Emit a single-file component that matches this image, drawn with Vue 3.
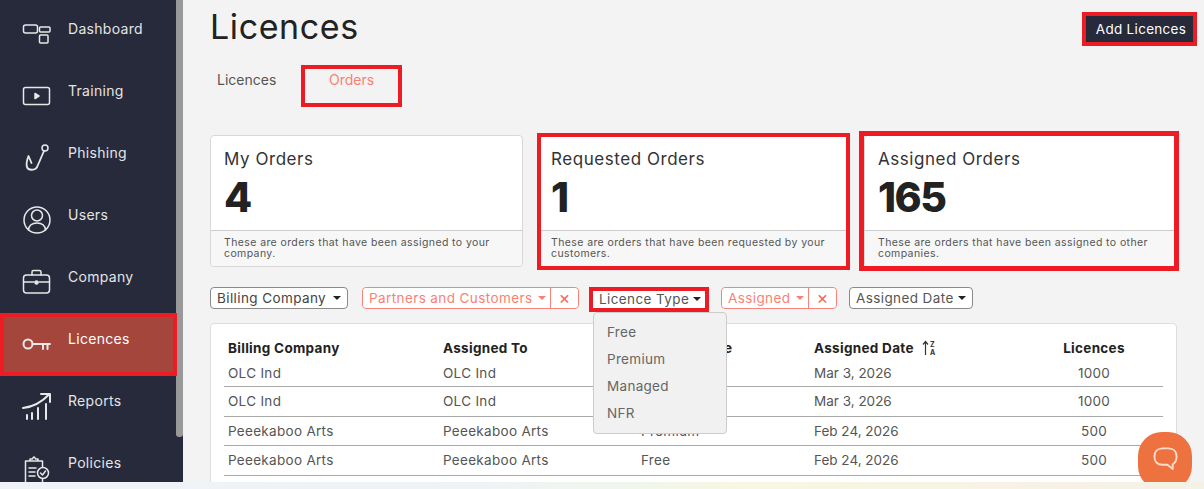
<script setup>
const nav = [
  { label: 'Dashboard', icon: '<rect x="1.5" y="6" width="14" height="8" rx="2"/><rect x="17.5" y="8" width="10.5" height="5" rx="1"/><rect x="17.5" y="16" width="8.5" height="8" rx="1"/>' },
  { label: 'Training', icon: '<rect x="1.5" y="6.5" width="26" height="17" rx="2"/><path d="M13 12.5l4 2.5-4 2.5z" fill="#e8e8e8"/>' },
  { label: 'Phishing', icon: '<circle cx="23" cy="5" r="3"/><path d="M22 8L15.5 23C14 28 5.5 28 4.7 23C4.3 20 5 17 6.5 13L9.5 20" stroke-width="1.8"/>' },
  { label: 'Users', icon: '<circle cx="15" cy="15" r="13"/><circle cx="15" cy="10.5" r="5.5"/><path d="M6.5 25C7 20 10 18 15 18C20 18 23 20 23.5 25"/>' },
  { label: 'Company', icon: '<rect x="1.5" y="8" width="26" height="18" rx="3"/><path d="M10 8V5Q10 3.5 11.5 3.5H17.5Q19 3.5 19 5V8M1.5 15H12M17 15H27.5"/><circle cx="14.5" cy="15.5" r="1.5" fill="#e8e8e8"/>' },
  { label: 'Licences', active: true, icon: '<circle cx="6" cy="15" r="4.5" stroke-width="2"/><path d="M10.5 15H28M21 15V20M25.5 15V20" stroke-width="2"/>' },
  { label: 'Reports', icon: '<path d="M1 17C10 16 20 11 27.5 3M19 3H28V11M5 24V28M10 22V28M16 17V28M24 13V28" stroke-width="2"/>' },
  { label: 'Policies', icon: '<path d="M8 8H3.5V32H20.5V26M16 8H20.5V14M8 8V6H10.5Q12 2 13.5 6H16V8ZM7 15H14M7 19H13M7 23H13"/><circle cx="21" cy="20" r="5.5"/><path d="M18.5 20l2 2 3-4"/>' },
]

const stats = [
  { title: 'My Orders', value: '4', note: 'These are orders that have been assigned to your company.', mark: '' },
  { title: 'Requested Orders', value: '1', note: 'These are orders that have been requested by your customers.', mark: 'mark-a' },
  { title: 'Assigned Orders', value: '165', note: 'These are orders that have been assigned to other companies.', mark: 'mark-b' },
]

const rows = [
  ['OLC Ind', 'OLC Ind', 'Managed', 'Mar 3, 2026', '1000'],
  ['OLC Ind', 'OLC Ind', 'Managed', 'Mar 3, 2026', '1000'],
  ['Peeekaboo Arts', 'Peeekaboo Arts', 'Premium', 'Feb 24, 2026', '500'],
  ['Peeekaboo Arts', 'Peeekaboo Arts', 'Free', 'Feb 24, 2026', '500'],
]
</script>

<template>
  <div class="page">
    <div class="top">
      <aside class="sidebar">
        <nav class="nav">
          <a v-for="item in nav" :key="item.label" class="nav-item" :class="{ active: item.active }">
            <svg class="nav-icon" viewBox="0 0 30 30" width="30" height="30" fill="none" stroke="#e8e8e8" stroke-width="1.5" stroke-linecap="round" stroke-linejoin="round" v-html="item.icon"></svg>
            <span>{{ item.label }}</span>
          </a>
        </nav>
        <div class="scroll"><div class="thumb"></div></div>
      </aside>

      <main class="main">
        <header class="head">
          <h1>Licences</h1>
          <button class="add">Add Licences</button>
        </header>

        <div class="tabs">
          <a class="tab">Licences</a>
          <a class="tab current">Orders</a>
        </div>

        <section class="cards">
          <div v-for="s in stats" :key="s.title" class="card">
            <div class="card-body">
              <h3>{{ s.title }}</h3>
              <div class="value">{{ s.value }}</div>
            </div>
            <div class="card-foot">{{ s.note }}</div>
            <div v-if="s.mark" class="mark" :class="s.mark"></div>
          </div>
        </section>

        <section class="filters">
          <button class="filter f-billing">Billing Company<i class="caret"></i></button>
          <div class="group f-partners">
            <button class="filter on">Partners and Customers<i class="caret"></i></button>
            <button class="clear">×</button>
          </div>
          <div class="dropdown-wrap">
            <button class="filter f-type">Licence Type<i class="caret"></i></button>
            <ul class="dropdown">
              <li>Free</li>
              <li>Premium</li>
              <li>Managed</li>
              <li>NFR</li>
            </ul>
          </div>
          <div class="group f-assigned">
            <button class="filter on">Assigned<i class="caret"></i></button>
            <button class="clear">×</button>
          </div>
          <button class="filter f-date">Assigned Date<i class="caret"></i></button>
        </section>

        <section class="table-card">
          <div class="row row-head">
            <div>Billing Company</div>
            <div>Assigned To</div>
            <div>Licence Type</div>
            <div class="sort">
              Assigned Date
              <svg viewBox="0 0 14 16" width="14" height="16">
                <path d="M3.5 15V2M1 4.5L3.5 1.5L6 4.5" fill="none" stroke="#333" stroke-width="1.2"/>
                <text x="8" y="7" font-size="7" font-weight="700" fill="#333">Z</text>
                <text x="8" y="15" font-size="7" font-weight="700" fill="#333">A</text>
              </svg>
            </div>
            <div class="num">Licences</div>
          </div>
          <div v-for="(r, i) in rows" :key="i" class="row">
            <div>{{ r[0] }}</div>
            <div>{{ r[1] }}</div>
            <div>{{ r[2] }}</div>
            <div class="date">{{ r[3] }}</div>
            <div class="num">{{ r[4] }}</div>
          </div>
        </section>
      </main>

      <button class="chat">
        <svg viewBox="0 0 28 28" width="27" height="27" fill="none" stroke="#fbdccb" stroke-width="2" stroke-linejoin="round">
          <path d="M11 3.5H17C22.5 3.5 25.5 7 25.5 12C25.5 16 24 18.5 21.5 20V25L16 20.5H11C5.5 20.5 2.5 17 2.5 12C2.5 7 5.5 3.5 11 3.5Z"/>
        </svg>
      </button>
    </div>
    <div class="strip"></div>
  </div>
</template>

<style>
html, body {
  margin: 0;
  background: #f3f3f3;
}
</style>

<style scoped>
* {
  box-sizing: border-box;
}

.page {
  width: 1204px;
  height: 489px;
  display: flex;
  flex-direction: column;
  overflow: hidden;
  font-family: Inter, "Liberation Sans", sans-serif;
  letter-spacing: 0.3px;
  background: #f3f3f3;
}

.top {
  height: 482px;
  display: flex;
  position: relative;
  overflow: hidden;
}

.strip {
  height: 7px;
  background: linear-gradient(90deg, #f0f2f8 0%, #eef3f6 40%, #f0f6ec 52%, #f9f6e2 62%, #f7f2e4 85%, #f5f1e6 100%);
}

.sidebar {
  width: 183px;
  flex-shrink: 0;
  display: flex;
  background: #262a3b;
}

.nav {
  width: 176px;
  padding-top: 3px;
}

.nav-item {
  display: flex;
  align-items: flex-start;
  height: 62px;
  width: 177px;
  padding: 16px 0 0 22px;
  color: #e4e4e4;
  font-size: 14px;
}

.nav-item span {
  margin-left: 16px;
  line-height: 20px;
}

.nav-item.active {
  height: 63px;
  margin-bottom: -1px;
  position: relative;
  background: #a5463c;
  color: #fff;
  box-shadow: inset 0 0 0 4px #ed1c24;
}

.nav-icon {
  flex-shrink: 0;
}

.scroll {
  width: 7px;
  height: 100%;
}

.thumb {
  height: 437px;
  background: #999;
  border-radius: 0 0 3px 3px;
}

.main {
  flex: 1;
  padding: 12px 27px 0;
  min-width: 0;
}

.head {
  display: flex;
  justify-content: space-between;
  align-items: flex-start;
  margin-right: -20px;
}

.head h1 {
  margin: 0;
  font-size: 34px;
  font-weight: 400;
  letter-spacing: 0.6px;
  line-height: 30px;
  color: #222;
}

.add {
  width: 115px;
  height: 34px;
  margin: 0;
  padding: 0 0 0 3px;
  border: 4px solid #ed1c24;
  background: #262a3b;
  color: #fff;
  font: inherit;
  font-size: 13.5px;
  letter-spacing: inherit;
}

.tabs {
  display: flex;
  margin-top: 19px;
  height: 42px;
  font-size: 14px;
}

.tab {
  width: 91px;
  padding: 6px 0 0 7px;
  line-height: 18px;
  letter-spacing: 0;
  color: #555;
}

.tab.current {
  width: 101px;
  padding-left: 0;
  text-align: center;
  color: #fb7f74;
  box-shadow: inset 0 0 0 4px #ed1c24;
}

.cards {
  display: grid;
  grid-template-columns: repeat(3, 313px);
  gap: 14px;
  margin-top: 28px;
}

.card {
  position: relative;
  height: 132px;
  display: flex;
  flex-direction: column;
  background: #fff;
  border: 1px solid #d8d8d8;
  border-radius: 4px;
}

.card-body {
  flex: 1;
  padding: 12px 14px 0 13px;
}

.card-body h3 {
  margin: 0;
  font-size: 17px;
  font-weight: 400;
  letter-spacing: 0.55px;
  line-height: 22px;
  color: #333;
}

.value {
  margin-top: 2px;
  font-size: 41px;
  font-weight: 800;
  letter-spacing: -1.5px;
  line-height: 50px;
  color: #222;
}

.card-foot {
  height: 36px;
  padding: 6px 12px 0 13px;
  background: #f7f7f7;
  border-top: 1px solid #ccc;
  border-radius: 0 0 4px 4px;
  font-size: 10.5px;
  letter-spacing: 0.4px;
  line-height: 11px;
  color: #555;
}

.mark {
  position: absolute;
  border: 4px solid #ed1c24;
  pointer-events: none;
}

.mark-a {
  inset: -3px -1px -4px -1px;
}

.mark-b {
  inset: -5px -3px -5px -6px;
  border-width: 5px;
}

.filters {
  display: flex;
  align-items: flex-start;
  gap: 12px;
  margin-top: 20px;
}

.filter {
  display: flex;
  align-items: center;
  justify-content: space-between;
  height: 22px;
  padding: 0 6px;
  background: #fff;
  border: 1px solid #8a8a8a;
  border-radius: 4px;
  font: inherit;
  font-size: 13.5px;
  letter-spacing: 0.4px;
  color: #555;
  white-space: nowrap;
}

.caret {
  width: 0;
  height: 0;
  border-left: 4px solid transparent;
  border-right: 4px solid transparent;
  border-top: 4px solid currentColor;
}

.f-billing {
  width: 138px;
  margin-right: 2px;
  color: #444;
}

.f-billing .caret,
.f-type .caret,
.f-date .caret {
  color: #222;
}

.group {
  display: flex;
  height: 22px;
  background: #fff;
  border: 1px solid #f8837a;
  border-radius: 4px;
}

.group .filter {
  flex: 1;
  height: 20px;
  padding-right: 4px;
  border: 0;
  border-right: 1px solid #f8837a;
  border-radius: 4px 0 0 4px;
  color: #fb7f74;
}

.clear {
  width: 27px;
  padding: 0;
  border: 0;
  border-radius: 0 4px 4px 0;
  background: #fff;
  color: #f9685c;
  font: inherit;
  font-size: 18px;
  line-height: 18px;
}

.f-partners {
  width: 217px;
  margin-right: -2px;
}

.f-assigned {
  width: 116px;
}

.dropdown-wrap {
  position: relative;
  height: 22px;
}

.f-type {
  width: 120px;
  height: 25px;
  padding: 0 4px 2px 6px;
  border: 4px solid #ed1c24;
  border-radius: 0;
}

.dropdown {
  position: absolute;
  z-index: 2;
  top: 25px;
  left: 4px;
  width: 134px;
  height: 122px;
  margin: 0;
  padding: 6px 0 0 13px;
  list-style: none;
  background: #f1f1f1;
  border: 1px solid #ccc;
  border-radius: 4px;
  font-size: 13.5px;
  line-height: 27px;
  color: #666;
}

.f-date {
  width: 124px;
}

.table-card {
  height: 190px;
  margin-top: 14px;
  padding: 12px 13px 0;
  background: #fff;
  border: 1px solid #ddd;
  border-radius: 4px;
}

.row {
  display: grid;
  grid-template-columns: 215px 198px 173px 213px 140px;
  align-items: center;
  height: 29.5px;
  padding-left: 4px;
  border-bottom: 1px solid #aaa;
  font-size: 13.5px;
  color: #555;
}

.row-head {
  height: 24px;
  border-bottom: 0;
  font-weight: 700;
  color: #222;
}

.row-head + .row {
  height: 27px;
}

.date {
  letter-spacing: 0;
}

.sort {
  display: flex;
  align-items: center;
  gap: 8px;
}

.sort text {
  font-family: Inter, sans-serif;
}

.num {
  text-align: center;
  margin-left: -6px;
}

.chat {
  position: absolute;
  left: 1138px;
  top: 432px;
  width: 54px;
  height: 58px;
  padding: 0 0 6px;
  border: 0;
  border-radius: 24px;
  background: #ee7240;
  display: flex;
  align-items: center;
  justify-content: center;
}
</style>
